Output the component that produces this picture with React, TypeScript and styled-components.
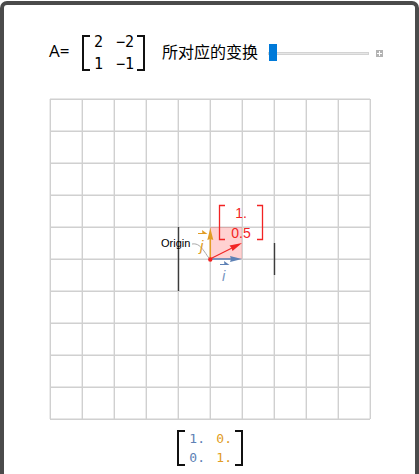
import React from "react";
import styled, { createGlobalStyle } from "styled-components";

const GlobalStyle = createGlobalStyle`
  *, *::before, *::after { box-sizing: border-box; }
  body { margin: 0; background: #fff; }
`;

const Panel = styled.main`
  min-height: 100vh;
  margin-top: 1px;
  padding: 30px 44px 4px 45px;
  border: 4px solid #4b4b4b;
  border-bottom: 0;
  border-radius: 7px 7px 0 0;
  background: #fff;
  color: #000;
  font-family: "Open Sans", "Noto Sans CJK SC", sans-serif;
`;

const Controls = styled.header`
  display: flex;
  align-items: center;
  height: 36px;
`;

const Name = styled.span`
  width: 33px;
  margin-top: -4px;
  font-size: 17px;
  line-height: 24px;
`;

const Caption = styled.label`
  margin: -4px 0 0 17px;
  font-family: "Noto Sans CJK SC", sans-serif;
  font-size: 16px;
  line-height: 24px;
  white-space: nowrap;
`;

const Bracketed = styled.div<{ $gap: number }>`
  display: flex;
  flex: none;
  gap: ${(p) => p.$gap}px;
  height: 36px;
  align-items: center;
`;

const Bracket = styled.span<{ $side: "left" | "right" }>`
  align-self: stretch;
  width: 8px;
  border: 2px solid #111;
  border-${(p) => (p.$side === "left" ? "right" : "left")}: 0;
`;

const Cells = styled.table<{ $size: number; $row: number; $first: number; $second: number }>`
  border-collapse: collapse;
  font-family: "DejaVu Sans Mono", monospace;
  font-size: ${(p) => p.$size}px;
  line-height: ${(p) => p.$row}px;
  td { padding: 0; text-align: right; width: ${(p) => p.$second}px; }
  td:first-child { width: ${(p) => p.$first}px; }
`;

const Basis = styled.td<{ $color: string }>`
  color: ${(p) => p.$color};
`;

const Slider = styled.input`
  flex: 1;
  min-width: 0;
  height: 18px;
  margin: 0 0 0 10px;
  appearance: none;
  background: transparent;
  &::-webkit-slider-runnable-track {
    height: 3px;
    border: 1px solid #d3d3d3;
    background: #e6e6e6;
  }
  &::-webkit-slider-thumb {
    appearance: none;
    width: 8px;
    height: 17px;
    margin-top: -9px;
    border: 0;
    border-radius: 0;
    background: #007ad9;
  }
`;

const Expand = styled.button`
  display: flex;
  flex: none;
  width: 7px;
  height: 7px;
  margin: 0 -12px 0 7px;
  padding: 0;
  border: 0;
  background: #b3b3b3;
`;

const Plot = styled.svg`
  display: block;
  width: 100%;
  margin-top: 27px;
  font-family: "Liberation Sans", sans-serif;
`;

const Result = styled.footer`
  display: flex;
  justify-content: center;
  margin-top: 10px;
`;

const BLUE = "#5e81b5";
const ORANGE = "#e19c24";
const RED = "#f22323";
const lines = Array.from({ length: 11 }, (_, k) => 1 + k * 32);

function Grid() {
  return (
    <g stroke="#d0d0d0" strokeWidth="1.4">
      {lines.map((p) => (
        <path key={p} d={`M${p + 0.3} 1V321M1 ${p + 0.3}H321`} />
      ))}
    </g>
  );
}

export default function App() {
  return (
    <>
      <GlobalStyle />
      <Panel>
        <Controls>
          <Name>A=</Name>
          <Bracketed $gap={3}>
            <Bracket $side="left" />
            <Cells $size={15} $row={22} $first={10} $second={31}>
              <tbody>
                <tr><td>2</td><td>−2</td></tr>
                <tr><td>1</td><td>−1</td></tr>
              </tbody>
            </Cells>
            <Bracket $side="right" />
          </Bracketed>
          <Caption htmlFor="progress">所对应的变换</Caption>
          <Slider id="progress" type="range" min={0} max={1} step={0.01} defaultValue={0} />
          <Expand type="button" aria-label="+">
            <svg width="7" height="7" viewBox="0 0 7 7" stroke="#fff">
              <path d="M1 3.5H6M3.5 1V6" />
            </svg>
          </Expand>
        </Controls>

        <Plot viewBox="0 0 322 322">
          <Grid />
          <rect x="161" y="129" width="32" height="32" fill="#ff0000" fillOpacity="0.18" />
          <path d="M129.5 129V193M225.5 145V177" stroke="#3c3c3c" strokeWidth="1.4" />
          <path d="M143 146C149 145 152 149 155 153S158 158 161 161" fill="none" stroke="#aaa" />
          <g stroke={BLUE} fill={BLUE}>
            <path d="M161 161H183" strokeWidth="1.5" />
            <path d="M193 161L181 164L182 161L181 158Z" stroke="none" />
            <path d="M171 166.500H179" />
            <path d="M175 163L180.500 167H175.500Z" stroke="none" />
          </g>
          <g stroke={ORANGE} fill={ORANGE}>
            <path d="M161.300 161V140" strokeWidth="1.5" />
            <path d="M161.300 130L164.300 142L161.300 141L158.300 142Z" stroke="none" />
            <path d="M149 135.500H157" />
            <path d="M153 132L158.500 136H153.500Z" stroke="none" />
          </g>
          <path d="M161 161L184 149.500" stroke={RED} strokeWidth="1.2" />
          <path d="M193 145L183.500 153L182.500 150L180.500 147.500Z" fill={RED} />
          <circle cx="161.300" cy="161.500" r="2.200" fill={RED} />
          <text x="112" y="149" fontSize="11" fill="#000">Origin</text>
          <text x="151" y="153" fontSize="15" fontStyle="italic" fill={ORANGE}>j</text>
          <text x="173" y="183" fontSize="15" fontStyle="italic" fill={BLUE} fillOpacity="0.85">i</text>
          <path d="M176 107.500H170.500V141.500H176M208 107.500H213.500V141.500H208" fill="none" stroke={RED} strokeWidth="1.3" />
          <g fontSize="14" fill={RED} textAnchor="middle">
            <text x="192" y="120">1.</text>
            <text x="192" y="140">0.5</text>
          </g>
        </Plot>

        <Result>
          <Bracketed $gap={3}>
            <Bracket $side="left" />
            <Cells $size={13} $row={19} $first={17} $second={27}>
              <tbody>
                <tr><Basis $color={BLUE}>1.</Basis><Basis $color={ORANGE}>0.</Basis></tr>
                <tr><Basis $color={BLUE}>0.</Basis><Basis $color={ORANGE}>1.</Basis></tr>
              </tbody>
            </Cells>
            <Bracket $side="right" />
          </Bracketed>
        </Result>
      </Panel>
    </>
  );
}
